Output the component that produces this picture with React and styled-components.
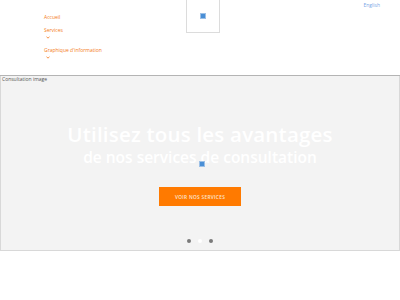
import React from 'react';
import styled, { createGlobalStyle } from 'styled-components';

const GlobalStyle = createGlobalStyle`
  html, body { margin: 0; padding: 0; background: #fff; }
  body { font-family: "Open Sans", "Liberation Sans", sans-serif; }
`;

const Page = styled.div`
  width: 400px;
  height: 300px;
  overflow: hidden;
  background: #fff;
`;

const Header = styled.header`
  height: 75px;
  display: grid;
  grid-template-columns: 186px 34px 1fr;
  border-bottom: 1px solid #b4b4b4;
`;

const Nav = styled.nav`
  display: flex;
  flex-direction: column;
  padding: 14px 0 0 44px;
`;

const NavItem = styled.a`
  display: block;
  color: #f47b20;
  font-size: 5px;
  line-height: 7px;
  text-decoration: none;
  margin-bottom: ${p => (p.$drop ? '0' : '6px')};
`;

const Chevron = styled.svg`
  display: block;
  width: 4px;
  height: 3px;
  margin: 2px 0 8px 2px;
`;

const LogoBox = styled.div`
  height: 33px;
  border: 1px solid #dcdcdc;
  border-top: none;
  box-sizing: border-box;
  display: flex;
  align-items: center;
  justify-content: center;
`;

const Broken = styled.span`
  display: block;
  width: 4px;
  height: 4px;
  background: #4a8fd6;
  border: 0.5px solid #9dc0e6;
`;

const Lang = styled.div`
  display: flex;
  justify-content: flex-end;
  padding: 2px 20px 0 0;
`;

const LangLink = styled.a`
  color: #7aa6e6;
  font-size: 5px;
  line-height: 7px;
  text-decoration: none;
`;

const Hero = styled.section`
  position: relative;
  height: 175px;
  background: #f3f3f3;
  border: 1px solid #d8d8d8;
  border-top: none;
  box-sizing: border-box;
  display: flex;
  flex-direction: column;
  align-items: center;
`;

const Alt = styled.div`
  align-self: flex-start;
  font-size: 5px;
  line-height: 6px;
  color: #555;
  padding-left: 1px;
`;

const Title = styled.h1`
  margin: 41px 0 0;
  font-family: "Open Sans", sans-serif;
  font-weight: 600;
  font-size: 20.5px;
  line-height: 22px;
  color: #fff;
  letter-spacing: 0.2px;
`;

const Subtitle = styled.h2`
  margin: 3px 0 0;
  font-family: "Open Sans", sans-serif;
  font-weight: 600;
  font-size: 15.5px;
  line-height: 18px;
  color: #fff;
`;

const Marker = styled(Broken)`
  position: absolute;
  left: 198px;
  top: 85px;
`;

const Button = styled.a`
  margin-top: 21px;
  width: 82px;
  height: 19px;
  background: #ff7a00;
  color: #fde7d2;
  font-size: 4.8px;
  letter-spacing: 0.3px;
  font-weight: 600;
  display: flex;
  align-items: center;
  justify-content: center;
  text-transform: uppercase;
`;

const Dots = styled.div`
  margin-top: 33px;
  display: flex;
  gap: 7px;
`;

const Dot = styled.span`
  width: 4px;
  height: 4px;
  border-radius: 50%;
  background: ${p => (p.$active ? '#fff' : '#7a7a7a')};
`;

const Down = () => (
  <Chevron viewBox="0 0 4 3">
    <path d="M0.5 0.6 L2 2.2 L3.5 0.6" fill="none" stroke="#f47b20" strokeWidth="0.8" />
  </Chevron>
);

export default function App() {
  return (
    <Page>
      <GlobalStyle />
      <Header>
        <Nav>
          <NavItem>Accueil</NavItem>
          <NavItem $drop>Services</NavItem>
          <Down />
          <NavItem $drop>Graphique d'information</NavItem>
          <Down />
        </Nav>
        <LogoBox>
          <Broken />
        </LogoBox>
        <Lang>
          <LangLink>English</LangLink>
        </Lang>
      </Header>
      <Hero>
        <Alt>Consultation image</Alt>
        <Title>Utilisez tous les avantages</Title>
        <Subtitle>de nos services de consultation</Subtitle>
        <Marker />
        <Button>Voir nos services</Button>
        <Dots>
          <Dot />
          <Dot $active />
          <Dot />
        </Dots>
      </Hero>
    </Page>
  );
}
